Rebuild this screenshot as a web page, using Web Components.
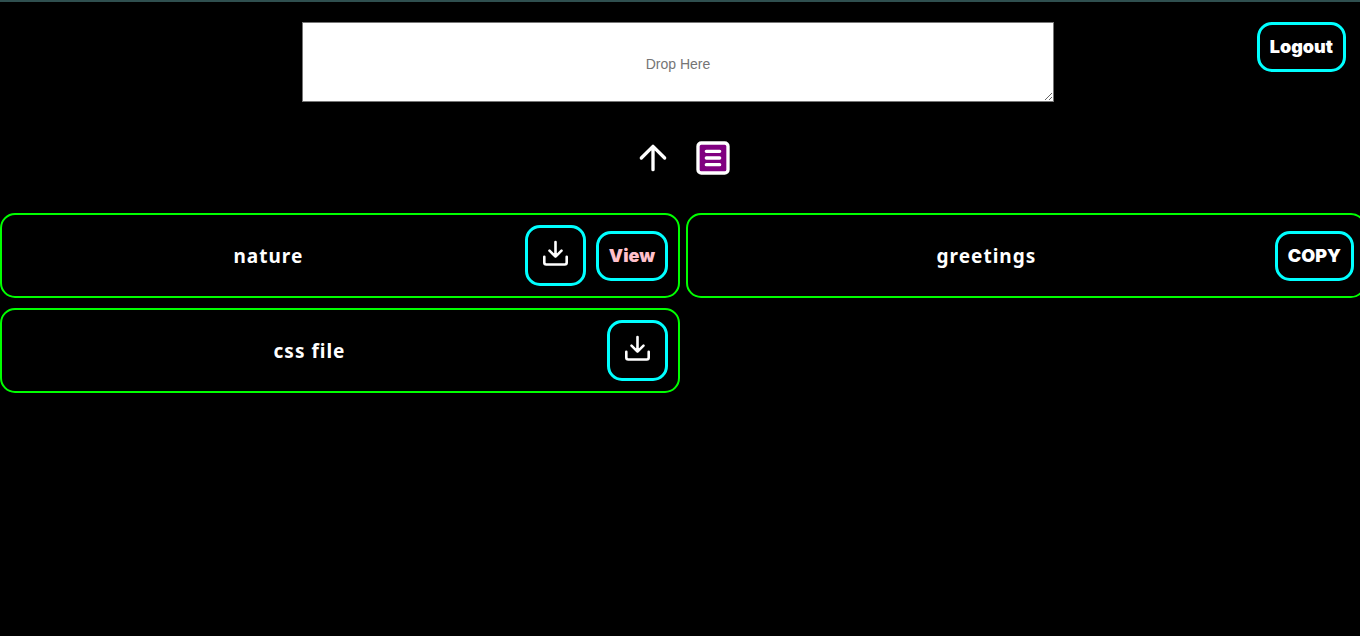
<!DOCTYPE html>
<html lang="en">
<head>
<meta charset="utf-8">
<meta name="viewport" content="width=device-width, initial-scale=1">
<title>Drop Here</title>
<style>
body { margin: 0; background: #000; color: #fff; font-family: "Noto Sans", sans-serif; overflow-x: hidden; }
</style>
</head>
<body>
<drop-app></drop-app>
<script>
const define = (name, html) => customElements.define(name, class extends HTMLElement {
  constructor() {
    super();
    const t = document.createElement('template');
    t.innerHTML = html;
    this.attachShadow({ mode: 'open' }).append(t.content.cloneNode(true));
  }
});

define('neon-button', `
<style>
:host { display: block; flex: none; }
button { display: block; box-sizing: border-box; min-height: 50px; padding: 10px; border: 3px solid #0ff; border-radius: 15px;
  background: #000; color: inherit; font: 900 18px/24px Inter, sans-serif; white-space: nowrap; cursor: pointer; }
</style>
<button type="button"><slot></slot></button>`);

define('download-button', `
<style>
:host { display: block; flex: none; }
svg { display: block; width: 35px; height: 35px; }
</style>
<neon-button><svg viewBox="0 0 35 35" role="img" aria-label="Download" fill="none" stroke="#fff" stroke-width="2.6" stroke-linecap="round" stroke-linejoin="round">
<path d="M17.5 4v14.5M11.5 12.7l6 6 6-6M6.3 18.7v5.8a2 2 0 0 0 2 2h18.4a2 2 0 0 0 2-2v-5.8"/></svg></neon-button>`);

define('file-card', `
<style>
:host { display: flex; align-items: center; box-sizing: border-box; min-height: 85px; padding: 10px;
  border: 2px solid #0f0; border-radius: 15px; }
h2 { flex: 1; margin: 0; text-align: center; font-weight: 700; font-size: 19px; line-height: 28px; letter-spacing: 1px; }
.actions { display: flex; align-items: center; gap: 10px; }
</style>
<h2><slot></slot></h2><div class="actions"><slot name="action"></slot></div>`);

define('mode-switch', `
<style>
:host { display: flex; justify-content: center; gap: 20px; padding-left: 6px; }
button { display: block; padding: 0; border: 0; background: none; cursor: pointer; }
svg { display: block; width: 40px; height: 40px; fill: none; stroke: #fff; stroke-width: 2; stroke-linecap: round; stroke-linejoin: round; }
</style>
<button type="button" aria-label="Upload"><svg viewBox="0 0 24 24"><path d="M12 19V5M5 12l7-7 7 7"/></svg></button>
<button type="button" aria-label="Text list"><svg viewBox="0 0 24 24"><rect x="3" y="3" width="18" height="18" rx="2" fill="purple"/><path d="M8 8h8M8 12h8M8 16h8"/></svg></button>`);

define('drop-header', `
<style>
:host { display: grid; grid-template-columns: 1fr 752px 1fr; align-items: start; padding: 20px 14px 0 10px; }
textarea { grid-column: 2; display: block; box-sizing: border-box; width: 100%; height: 80px; margin: 0; padding: 32px 2px 2px;
  border: 1px solid #767676; border-radius: 0; background: #fff; text-align: center; font: 14px/18px "Liberation Sans", Arial, sans-serif; resize: both; }
textarea::placeholder { color: #757575; }
neon-button { justify-self: end; }
</style>
<textarea placeholder="Drop Here" aria-label="Drop Here"></textarea>
<neon-button>Logout</neon-button>`);

define('drop-app', `
<style>
:host { display: block; box-sizing: border-box; min-height: 100vh; border-top: 2px solid darkslategray; overflow: hidden; }
mode-switch { padding-top: 36px; padding-bottom: 35px; }
main { display: grid; grid-template-columns: 50% 50%; gap: 10px 6px; }
.view { color: pink; }
</style>
<drop-header></drop-header>
<mode-switch></mode-switch>
<main>
<file-card>nature<download-button slot="action"></download-button><neon-button class="view" slot="action">View</neon-button></file-card>
<file-card>greetings<neon-button slot="action">COPY</neon-button></file-card>
<file-card>css file<download-button slot="action"></download-button></file-card>
</main>`);
</script>
</body>
</html>
